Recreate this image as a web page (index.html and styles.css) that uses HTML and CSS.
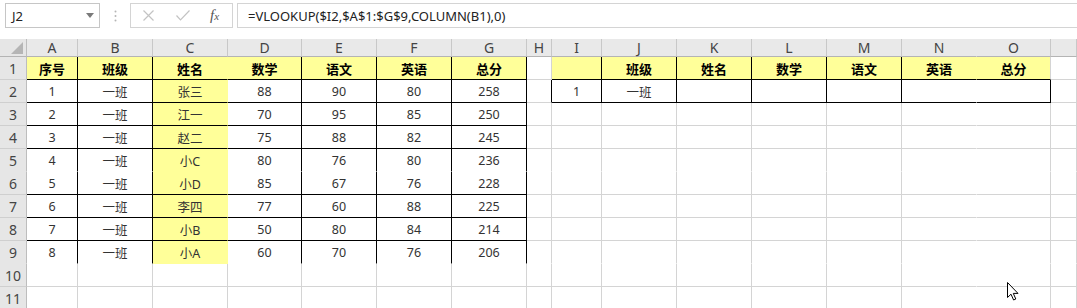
FILE: index.html
```html
<!DOCTYPE html>
<html lang="zh">
<head>
<meta charset="utf-8">
<title>VLOOKUP</title>
<link rel="stylesheet" href="styles.css">
</head>
<body>
<div class="fbar">
  <div class="namebox"><span>J2</span><svg class="dd" width="8" height="5" viewBox="0 0 8 5"><path d="M0 0H8L4 5Z" fill="#7a7a7a"/></svg></div>
  <div class="dots"><svg width="3" height="12" viewBox="0 0 3 12"><circle cx="1.5" cy="1.5" r="1" fill="#b5b5b5"/><circle cx="1.5" cy="6" r="1" fill="#b5b5b5"/><circle cx="1.5" cy="10.5" r="1" fill="#b5b5b5"/></svg></div>
  <div class="fbtns">
    <svg width="11" height="11" viewBox="0 0 11 11"><path d="M0.5 0.5L10.5 10.5M10.5 0.5L0.5 10.5" stroke="#c3c3c3" stroke-width="1.2" fill="none"/></svg>
    <svg width="14" height="11" viewBox="0 0 14 11"><path d="M0.5 5.5L4.5 9.8L13.5 0.5" stroke="#c3c3c3" stroke-width="1.2" fill="none"/></svg>
    <span class="fx"><i>f</i><i class="x">x</i></span>
  </div>
  <div class="formula">=VLOOKUP($I2,$A$1:$G$9,COLUMN(B1),0)</div>
</div>

<div class="sheet">
  <div class="row">
    <div class="corner"><i></i></div>
    <div class="ch">A</div><div class="ch">B</div><div class="ch">C</div><div class="ch">D</div>
    <div class="ch">E</div><div class="ch">F</div><div class="ch">G</div><div class="ch">H</div>
    <div class="ch">I</div><div class="ch">J</div><div class="ch">K</div><div class="ch">L</div>
    <div class="ch">M</div><div class="ch nr">N</div><div class="ch">O</div><div class="ch"></div>
  </div>

  <div class="row">
    <div class="rh">1</div>
    <div class="c y br bb h">序号</div>
    <div class="c y br bb h">班级</div>
    <div class="c y bb h">姓名</div>
    <div class="c y br bb h">数学</div>
    <div class="c y br bb h">语文</div>
    <div class="c y br bb h">英语</div>
    <div class="c y br bb h">总分</div>
    <div class="c"></div>
    <div class="c y br bb"></div>
    <div class="c y br bb h">班级</div>
    <div class="c y br bb h">姓名</div>
    <div class="c y br bb h">数学</div>
    <div class="c y br bb h">语文</div>
    <div class="c y bb h">英语</div>
    <div class="c y bb gr h">总分</div>
    <div class="c"></div>
  </div>

  <div class="row">
    <div class="rh">2</div>
    <div class="c br bb">1</div>
    <div class="c br bb">一班</div>
    <div class="c y bb">张三</div>
    <div class="c br bb">88</div>
    <div class="c br bb">90</div>
    <div class="c br bb">80</div>
    <div class="c br bb">258</div>
    <div class="c br"></div>
    <div class="c br bb">1</div>
    <div class="c br bb">一班</div>
    <div class="c br bb"></div>
    <div class="c br bb"></div>
    <div class="c br bb"></div>
    <div class="c nr bb"></div>
    <div class="c br bb"></div>
    <div class="c"></div>
  </div>

  <div class="row">
    <div class="rh">3</div>
    <div class="c br bb">2</div>
    <div class="c br bb">一班</div>
    <div class="c y bb">江一</div>
    <div class="c br bb">70</div>
    <div class="c br bb">95</div>
    <div class="c br bb">85</div>
    <div class="c br bb">250</div>
    <div class="c"></div><div class="c"></div><div class="c"></div><div class="c"></div>
    <div class="c"></div><div class="c"></div><div class="c nr"></div><div class="c"></div><div class="c"></div>
  </div>

  <div class="row">
    <div class="rh">4</div>
    <div class="c br bb">3</div>
    <div class="c br bb">一班</div>
    <div class="c y bb">赵二</div>
    <div class="c br bb">75</div>
    <div class="c br bb">88</div>
    <div class="c br bb">82</div>
    <div class="c br bb">245</div>
    <div class="c"></div><div class="c"></div><div class="c"></div><div class="c"></div>
    <div class="c"></div><div class="c"></div><div class="c nr"></div><div class="c"></div><div class="c"></div>
  </div>

  <div class="row nob">
    <div class="rh">5</div>
    <div class="c br">4</div>
    <div class="c br">一班</div>
    <div class="c y">小C</div>
    <div class="c br">80</div>
    <div class="c br">76</div>
    <div class="c br">80</div>
    <div class="c br">236</div>
    <div class="c"></div><div class="c"></div><div class="c"></div><div class="c"></div>
    <div class="c"></div><div class="c"></div><div class="c nr"></div><div class="c"></div><div class="c"></div>
  </div>

  <div class="row">
    <div class="rh">6</div>
    <div class="c br bb">5</div>
    <div class="c br bb">一班</div>
    <div class="c y bb">小D</div>
    <div class="c br bb">85</div>
    <div class="c br bb">67</div>
    <div class="c br bb">76</div>
    <div class="c br bb">228</div>
    <div class="c"></div><div class="c"></div><div class="c"></div><div class="c"></div>
    <div class="c"></div><div class="c"></div><div class="c nr"></div><div class="c"></div><div class="c"></div>
  </div>

  <div class="row">
    <div class="rh">7</div>
    <div class="c br bb">6</div>
    <div class="c br bb">一班</div>
    <div class="c y bb">李四</div>
    <div class="c br bb">77</div>
    <div class="c br bb">60</div>
    <div class="c br bb">88</div>
    <div class="c br bb">225</div>
    <div class="c"></div><div class="c"></div><div class="c"></div><div class="c"></div>
    <div class="c"></div><div class="c"></div><div class="c nr"></div><div class="c"></div><div class="c"></div>
  </div>

  <div class="row">
    <div class="rh">8</div>
    <div class="c br bb">7</div>
    <div class="c br bb">一班</div>
    <div class="c y bb">小B</div>
    <div class="c br bb">50</div>
    <div class="c br bb">80</div>
    <div class="c br bb">84</div>
    <div class="c br bb">214</div>
    <div class="c"></div><div class="c"></div><div class="c"></div><div class="c"></div>
    <div class="c"></div><div class="c"></div><div class="c nr"></div><div class="c"></div><div class="c"></div>
  </div>

  <div class="row nob">
    <div class="rh">9</div>
    <div class="c br">8</div>
    <div class="c br">一班</div>
    <div class="c y">小A</div>
    <div class="c br">60</div>
    <div class="c br">70</div>
    <div class="c br">76</div>
    <div class="c br">206</div>
    <div class="c"></div><div class="c"></div><div class="c"></div><div class="c"></div>
    <div class="c"></div><div class="c"></div><div class="c nr"></div><div class="c"></div><div class="c"></div>
  </div>

  <div class="row">
    <div class="rh">10</div>
    <div class="c"></div><div class="c"></div><div class="c"></div><div class="c"></div>
    <div class="c"></div><div class="c"></div><div class="c"></div><div class="c"></div>
    <div class="c"></div><div class="c"></div><div class="c"></div><div class="c"></div>
    <div class="c"></div><div class="c nr"></div><div class="c"></div><div class="c"></div>
  </div>

  <div class="row">
    <div class="rh">11</div>
    <div class="c"></div><div class="c"></div><div class="c"></div><div class="c"></div>
    <div class="c"></div><div class="c"></div><div class="c"></div><div class="c"></div>
    <div class="c"></div><div class="c"></div><div class="c"></div><div class="c"></div>
    <div class="c"></div><div class="c nr"></div><div class="c"></div><div class="c"></div>
  </div>
</div>

<svg class="cursor" width="13" height="19" viewBox="0 0 13 19"><path d="M0.5 0.5V15.5L4 12.2L6.6 18L8.8 17L6.3 11.4H11Z" fill="#fff" stroke="#000" stroke-width="1"/></svg>
</body>
</html>
```

FILE: styles.css
```css
html, body {
  margin: 0;
  padding: 0;
}
body {
  width: 1077px;
  height: 308px;
  overflow: hidden;
  background: #fff;
  position: relative;
  font-family: "Noto Sans", "Noto Sans CJK SC", sans-serif;
  color: #333;
}

/* formula bar */
.fbar {
  display: flex;
  align-items: flex-start;
  height: 39px;
  box-sizing: border-box;
  padding: 3px 0 0 5px;
}
.namebox {
  width: 95px;
  height: 25px;
  box-sizing: border-box;
  border: 1px solid #c6c6c6;
  display: flex;
  align-items: center;
  justify-content: space-between;
  padding: 0 5px 0 6px;
  font-size: 13px;
  color: #222;
}
.dots {
  width: 30px;
  height: 25px;
  display: flex;
  align-items: center;
  justify-content: center;
}
.fbtns {
  width: 103px;
  height: 25px;
  box-sizing: border-box;
  border: 1px solid #d4d4d4;
  display: flex;
  align-items: center;
  padding: 0 0 0 12px;
  gap: 22px;
}
.fx {
  font-family: "Liberation Serif", serif;
  font-size: 15px;
  color: #555;
  margin-left: -2px;
}
.fx .x {
  font-size: 11px;
}
.formula {
  flex: 1;
  height: 25px;
  box-sizing: border-box;
  border: 1px solid #d4d4d4;
  border-right: none;
  margin-left: 4px;
  padding-left: 10px;
  display: flex;
  align-items: center;
  font-size: 13px;
  color: #222;
}

/* sheet grid */
.sheet {
  display: grid;
  grid-template-columns: 27px 51px 75px 75px 74px 75px 75px 75px 25px 50px 75px 75px 75px 75px 75px 74px 26px;
  grid-template-rows: 18px repeat(11, 23px);
}
.row {
  display: contents;
}
.corner {
  background: #e6e6e6;
  border-right: 1px solid #bdbdbd;
  border-bottom: 1px solid #b4b4b4;
  display: flex;
  align-items: flex-end;
  justify-content: flex-end;
  padding: 0 3px 2px 0;
}
.corner i {
  width: 12px;
  height: 12px;
  background: #b5b5b5;
  clip-path: polygon(100% 0, 100% 100%, 0 100%);
}
.ch {
  background: #e9e9e9;
  border-right: 1px solid #c8c8c8;
  border-bottom: 1px solid #b4b4b4;
  display: flex;
  align-items: center;
  justify-content: center;
  font-size: 14px;
  color: #444;
  line-height: 1;
}
.rh {
  background: #e6e6e6;
  border-right: 1px solid #bdbdbd;
  border-bottom: 1px solid #cfcfcf;
  display: flex;
  align-items: center;
  justify-content: center;
  font-size: 14px;
  color: #444;
}

.c {
  border-right: 1px solid #d4d4d4;
  border-bottom: 1px solid #d4d4d4;
  display: flex;
  align-items: center;
  justify-content: center;
  font-size: 12.5px;
  color: #333;
  white-space: nowrap;
}
.y {
  background: #ffff99;
  border-right-color: transparent;
  border-bottom-color: transparent;
}
.h {
  font-weight: bold;
  font-size: 13px;
  color: #000;
}
.br {
  border-right-color: #000;
}
.bb {
  border-bottom-color: #000;
}
.gr {
  border-right-color: #d4d4d4;
}
.nr {
  border-right-color: transparent;
}
.nob > * {
  border-bottom-color: transparent;
}

.cursor {
  position: absolute;
  left: 1007px;
  top: 282px;
}
```
